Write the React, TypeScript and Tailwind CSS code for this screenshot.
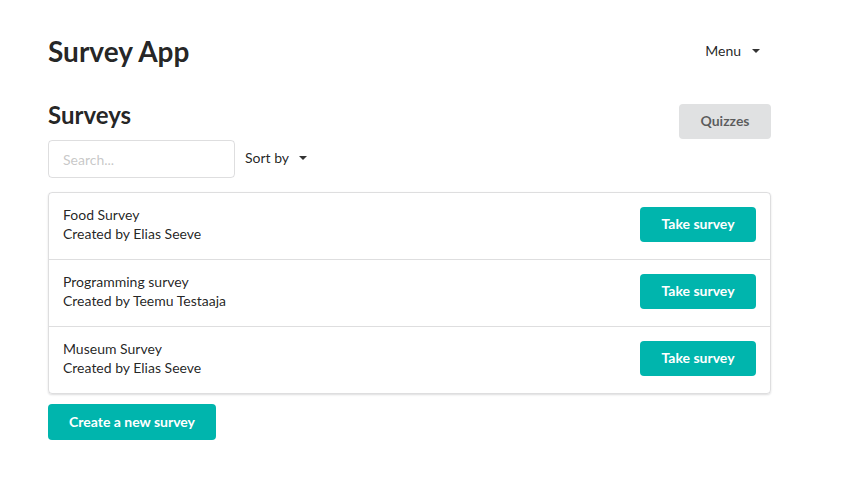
const surveys = [
  { name: 'Food Survey', author: 'Elias Seeve' },
  { name: 'Programming survey', author: 'Teemu Testaaja' },
  { name: 'Museum Survey', author: 'Elias Seeve' },
];

function Caret() {
  return <span className="inline-block w-0 h-0 border-l-[4px] border-r-[4px] border-t-[4px] border-l-transparent border-r-transparent border-t-[#333]" />;
}

export default function App() {
  return (
    <div className="min-h-screen bg-white text-[14px] text-[rgba(0,0,0,0.87)]" style={{ fontFamily: 'Lato, "Helvetica Neue", Arial, sans-serif' }}>
      <div className="w-[723px] ml-[48px] pt-[33px]">
        {/* header */}
        <div className="flex items-center justify-between h-[36px]">
          <h1 className="text-[28px] font-bold leading-none">Survey App</h1>
          <div className="flex items-center gap-[11px] mr-[11px] mt-[-1px]">
            <span>Menu</span>
            <Caret />
          </div>
        </div>

        {/* surveys title */}
        <div className="flex items-start justify-between mt-[35px]">
          <h2 className="text-[24px] font-bold leading-none mt-[-1px]">Surveys</h2>
          <button className="w-[92px] h-[35px] rounded-[4px] bg-[#e0e1e2] text-[rgba(0,0,0,0.6)] font-bold leading-none pb-[1px]">Quizzes</button>
        </div>

        {/* search */}
        <div className="flex items-center mt-[1px]">
          <input
            placeholder="Search..."
            className="w-[187px] h-[38px] rounded-[4px] border border-[rgba(34,36,38,0.15)] px-[14px] placeholder:text-[rgba(191,191,191,0.87)] outline-none"
          />
          <div className="flex items-center gap-[10px] ml-[10px] mt-[-3px]">
            <span>Sort by</span>
            <Caret />
          </div>
        </div>

        {/* list */}
        <div className="mt-[14px] rounded-[4px] border border-[rgba(34,36,38,0.15)] shadow-[0_1px_2px_0_rgba(34,36,38,0.15)]">
          {surveys.map((s, i) => (
            <div key={i} className={`flex items-center justify-between px-[14px] pb-[4px] ${i > 0 ? 'h-[67px] border-t border-[rgba(34,36,38,0.15)]' : 'h-[66px]'}`}>
              <div className="leading-[19px]">
                <div>{s.name}</div>
                <div>Created by {s.author}</div>
              </div>
              <button className="w-[116px] h-[35px] rounded-[4px] bg-[#00b5ad] text-white font-bold leading-none pb-[1px]">Take survey</button>
            </div>
          ))}
        </div>

        <button className="mt-[10px] w-[168px] h-[36px] rounded-[4px] bg-[#00b5ad] text-white font-bold leading-none pb-[1px]">Create a new survey</button>
      </div>
    </div>
  );
}
